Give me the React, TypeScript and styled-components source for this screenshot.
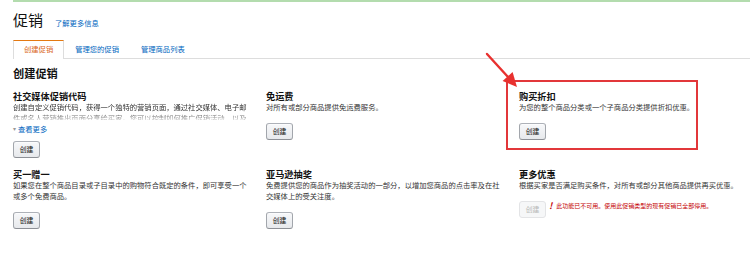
import React from "react";
import styled, { createGlobalStyle, css } from "styled-components";

const GlobalStyle = createGlobalStyle`
  html, body {
    margin: 0;
    padding: 0;
    background: #ffffff;
    overflow: hidden;
  }
  body {
    font-family: "Noto Sans CJK SC", "Liberation Sans", sans-serif;
    color: #111111;
  }
`;

const Page = styled.div`
  position: relative;
  width: 750px;
  height: 270px;
  padding-left: 13px;
  box-sizing: border-box;
  overflow: hidden;
`;

const NoticeEdge = styled.div`
  height: 2px;
  background: #b3dcae;
`;

const Header = styled.div`
  display: flex;
  align-items: baseline;
  gap: 12px;
  margin-top: 9px;
`;

const PageTitle = styled.h1`
  margin: 0;
  font-size: 15px;
  line-height: 18px;
  font-weight: 400;
  color: #111;
`;

const Link = styled.a`
  font-size: 7.3px;
  line-height: 10px;
  color: #0066c0;
  text-decoration: none;
  cursor: pointer;
`;

const TabBar = styled.div`
  display: flex;
  margin-top: 11px;
  border-bottom: 1px solid #dddddd;
`;

const Tab = styled.div<{ $active?: boolean }>`
  padding: 0 10px;
  height: 17px;
  line-height: 16px;
  font-size: 7.3px;
  color: #0066c0;
  border: 1px solid transparent;
  border-bottom: none;
  margin-bottom: -1px;
  ${(p) =>
    p.$active &&
    css`
      color: #d9661a;
      background: #ffffff;
      border-color: #dddddd;
      border-top-color: #e47911;
      height: 18px;
    `}
`;

const SectionHeading = styled.h2`
  margin: 7px 0 0;
  font-size: 11.2px;
  line-height: 14px;
  font-weight: 700;
`;

const Grid = styled.div`
  display: grid;
  grid-template-columns: repeat(3, 236px);
  column-gap: 17px;
  row-gap: 10px;
  margin-top: 10px;
`;

const Card = styled.div<{ $highlight?: boolean }>`
  position: relative;
  ${(p) =>
    p.$highlight &&
    css`
      &::before {
        content: "";
        position: absolute;
        left: -13px;
        top: -10px;
        width: 188px;
        height: 66px;
        border: 2px solid #e2373a;
        pointer-events: none;
      }
    `}
`;

const CardTitle = styled.h3`
  margin: 0;
  font-size: 9.2px;
  line-height: 12px;
  font-weight: 700;
  color: #111;
`;

const Desc = styled.p<{ $clipped?: boolean }>`
  margin: 0;
  font-size: 7.3px;
  line-height: 11px;
  color: #333333;
  ${(p) =>
    p.$clipped &&
    css`
      max-height: 18px;
      overflow: hidden;
      -webkit-mask-image: linear-gradient(#000 55%, rgba(0, 0, 0, 0.25));
      mask-image: linear-gradient(#000 55%, rgba(0, 0, 0, 0.25));
    `}
`;

const SeeMore = styled.div`
  display: flex;
  align-items: center;
  gap: 2px;
  margin-top: 4px;
  font-size: 7.3px;
  line-height: 10px;
  color: #0066c0;
`;

const Caret = styled.span`
  font-size: 6px;
  color: #999;
`;

const ActionRow = styled.div<{ $tight?: boolean }>`
  display: flex;
  align-items: center;
  gap: 3px;
  margin-top: ${(p) => (p.$tight ? 7 : 10)}px;
`;

const Button = styled.button`
  width: 27px;
  height: 17px;
  padding: 0;
  font-family: inherit;
  font-size: 6.8px;
  line-height: 15px;
  color: #111;
  background: linear-gradient(#f7f8fa, #e7e9ec);
  border: 1px solid;
  border-color: #adb1b8 #a2a6ac #8d9096;
  border-radius: 3px;
  box-shadow: 0 1px 0 rgba(255, 255, 255, 0.6) inset;
  cursor: pointer;
  &:disabled {
    color: #b7b7b7;
    background: #f6f7f8;
    border-color: #e3e4e6;
    box-shadow: none;
    cursor: default;
  }
`;

const Warning = styled.span`
  display: flex;
  align-items: center;
  gap: 4px;
  font-size: 6px;
  line-height: 10px;
  color: #c40000;
  margin-top: -7px;
`;

const Bang = styled.b`
  font-size: 9px;
  font-style: italic;
`;

const Arrow = styled.svg`
  position: absolute;
  left: 484px;
  top: 50px;
  overflow: visible;
`;

type Promo = {
  title: string;
  desc: string;
  clipped?: boolean;
  highlight?: boolean;
  disabled?: boolean;
};

const promos: Promo[] = [
  {
    title: "社交媒体促销代码",
    desc: "创建自定义促销代码，获得一个独特的营销页面，通过社交媒体、电子邮件或名人营销推出页面分享给买家。您可以控制如何推广促销活动，以及",
    clipped: true,
  },
  { title: "免运费", desc: "对所有或部分商品提供免运费服务。" },
  {
    title: "购买折扣",
    desc: "为您的整个商品分类或一个子商品分类提供折扣优惠。",
    highlight: true,
  },
  {
    title: "买一赠一",
    desc: "如果您在整个商品目录或子目录中的购物符合既定的条件，即可享受一个或多个免费商品。",
  },
  {
    title: "亚马逊抽奖",
    desc: "免费提供您的商品作为抽奖活动的一部分，以增加您商品的点击率及在社交媒体上的受关注度。",
  },
  {
    title: "更多优惠",
    desc: "根据买家是否满足购买条件，对所有或部分其他商品提供再买优惠。",
    disabled: true,
  },
];

export default function App() {
  return (
    <>
      <GlobalStyle />
      <Page>
        <NoticeEdge />
        <Header>
          <PageTitle>促销</PageTitle>
          <Link>了解更多信息</Link>
        </Header>
        <TabBar>
          <Tab $active>创建促销</Tab>
          <Tab>管理您的促销</Tab>
          <Tab>管理商品列表</Tab>
        </TabBar>
        <SectionHeading>创建促销</SectionHeading>
        <Grid>
          {promos.map((p) => (
            <Card key={p.title} $highlight={p.highlight}>
              <CardTitle>{p.title}</CardTitle>
              <Desc $clipped={p.clipped}>{p.desc}</Desc>
              {p.clipped && (
                <SeeMore>
                  <Caret>▾</Caret>
                  查看更多
                </SeeMore>
              )}
              <ActionRow $tight={p.clipped}>
                <Button disabled={p.disabled}>创建</Button>
                {p.disabled && (
                  <Warning>
                    <Bang>!</Bang>
                    此功能已不可用。使用此促销类型的现有促销已全部停用。
                  </Warning>
                )}
              </ActionRow>
            </Card>
          ))}
        </Grid>
        {/* red annotation arrow pointing at the highlighted card */}
        <Arrow width="40" height="42" viewBox="0 0 40 42">
          <line x1="3" y1="4" x2="24" y2="27" stroke="#e8312f" strokeWidth="2.4" strokeLinecap="round" />
          <polygon points="33,37 18.6,31 28.6,22" fill="#e8312f" />
        </Arrow>
      </Page>
    </>
  );
}
